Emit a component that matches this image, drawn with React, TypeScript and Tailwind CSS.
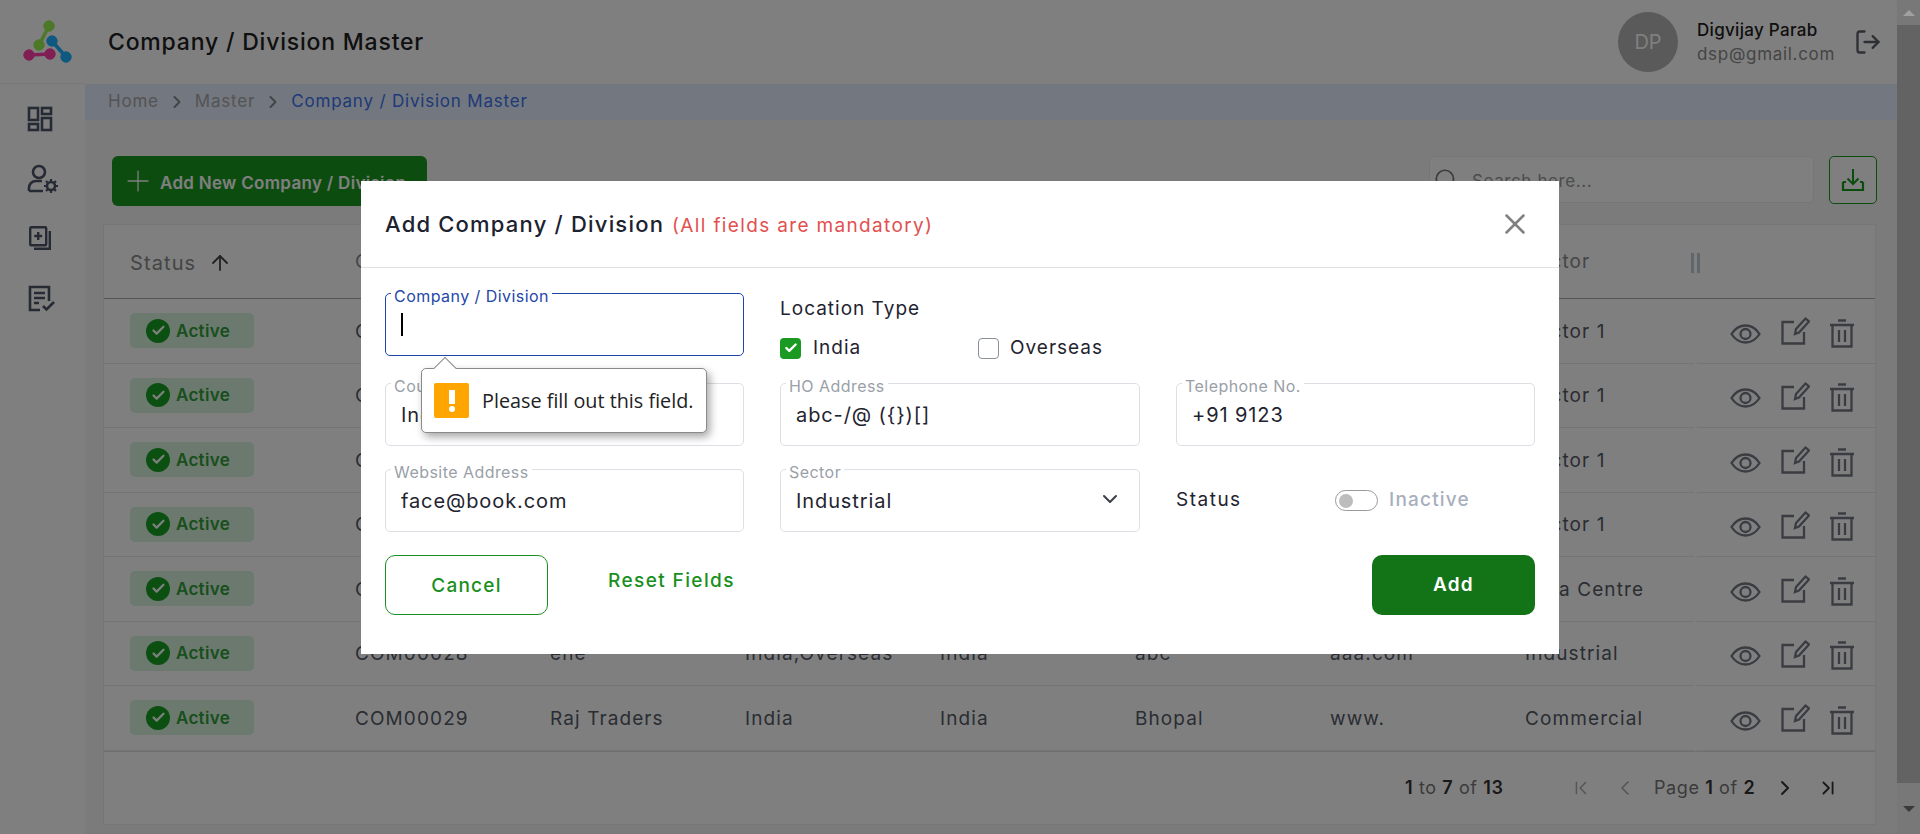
import { ArrowUp, Check, ChevronDown, ChevronFirst, ChevronLast, ChevronLeft, ChevronRight, LogOut, Plus, Search, X } from 'lucide-react'

const rows = [
  { id: 'COM00001', name: 'Alpha Ltd', loc: 'India', country: 'India', addr: 'Pune', web: 'abc.com', sector: 'Sector 1' },
  { id: 'COM00002', name: 'Beta Ltd', loc: 'India', country: 'India', addr: 'Pune', web: 'abc.com', sector: 'Sector 1' },
  { id: 'COM00003', name: 'Gamma Ltd', loc: 'India', country: 'India', addr: 'Pune', web: 'abc.com', sector: 'Sector 1' },
  { id: 'COM00004', name: 'Delta Ltd', loc: 'India', country: 'India', addr: 'Pune', web: 'abc.com', sector: 'Sector 1' },
  { id: 'COM00005', name: 'Sigma Ltd', loc: 'India', country: 'India', addr: 'Pune', web: 'abc.com', sector: 'Data Centre' },
  { id: 'COM00028', name: 'ene', loc: 'India,Overseas', country: 'India', addr: 'abc', web: 'aaa.com', sector: 'Industrial' },
  { id: 'COM00029', name: 'Raj Traders', loc: 'India', country: 'India', addr: 'Bhopal', web: 'www.', sector: 'Commercial' },
]

const gridCols = 'grid grid-cols-[251px_195px_195px_195px_195px_195px_195px_1fr]'

const Logo = () => (
  <svg width="84" height="84" viewBox="0 0 84 84">
    <g stroke="#98f050" fill="#98f050">
      <path d="M49 26 L39 45" strokeWidth="3.5" />
      <circle cx="49" cy="26" r="5.2" />
      <circle cx="39" cy="45" r="5.2" />
    </g>
    <g stroke="#1eb0ff" fill="#1eb0ff">
      <path d="M52 41 L66 57" strokeWidth="3.5" />
      <circle cx="52" cy="41" r="5.2" />
      <circle cx="66" cy="57" r="5.2" />
    </g>
    <g stroke="#ff3ea8" fill="#ff3ea8">
      <path d="M29 55 L50 54" strokeWidth="3.5" />
      <circle cx="29" cy="55" r="5.2" />
      <circle cx="50" cy="54" r="5.2" />
    </g>
  </svg>
)

const DashboardIcon = () => (
  <svg width="26" height="26" viewBox="0 0 26 26" fill="none" stroke="#4c5568" strokeWidth="2.6">
    <rect x="2" y="2" width="9" height="12" />
    <rect x="15" y="2" width="9" height="6" />
    <rect x="2" y="18" width="9" height="6" />
    <rect x="15" y="12" width="9" height="12" />
  </svg>
)

const UserGearIcon = () => (
  <svg width="32" height="30" viewBox="0 0 32 30" fill="none" stroke="#4c5568" strokeWidth="2.6">
    <circle cx="12" cy="8" r="6" />
    <path d="M2 27v-3c0-4 3-7 7-7h6M2 27h14" />
    <circle cx="24" cy="22" r="4" />
    <path d="M24 15v3M24 26v3M17 22h3M28 22h3M19 17l2 2M27 25l2 2M29 17l-2 2M21 25l-2 2" strokeWidth="2.2" />
  </svg>
)

const AddDocIcon = () => (
  <svg width="22" height="24" viewBox="0 0 22 24" fill="none" stroke="#4c5568" strokeWidth="2.4">
    <rect x="1.2" y="1.2" width="16" height="18" rx="1" />
    <path d="M20.8 5v17.8H5" />
    <path d="M9.2 6v8M5.2 10h8" />
  </svg>
)

const ChecklistIcon = () => (
  <svg width="27" height="27" viewBox="0 0 27 27" fill="none" stroke="#4c5568" strokeWidth="2.6">
    <path d="M12 25H2V2h19v14" />
    <path d="M6 8h11M6 13h11M6 18h5" />
    <path d="M15 21l3.5 3.5L26 17" />
  </svg>
)

const ExportIcon = () => (
  <svg width="24" height="24" viewBox="0 0 24 24" fill="none" stroke="#18981f" strokeWidth="2">
    <path d="M12 1v15M6.5 10.5L12 16l5.5-5.5" />
    <path d="M2 14v8h20v-8" strokeWidth="2.2" />
    <path d="M2 14h3M19 14h3" />
  </svg>
)

const EyeIcon = () => (
  <svg width="31" height="20" viewBox="0 0 31 20" fill="none" stroke="#747984" strokeWidth="2.3" className="mt-[6px]">
    <path d="M1.5 10C5 4.5 10 1.5 15.5 1.5S26 4.5 29.5 10C26 15.5 21 18.5 15.5 18.5S5 15.5 1.5 10Z" />
    <circle cx="15.5" cy="10" r="5" />
  </svg>
)

const EditIcon = () => (
  <svg width="29" height="29" viewBox="0 0 29 29" fill="none" stroke="#747984" strokeWidth="2.3">
    <path d="M13 6H1.5v21.5H23V16" />
    <path d="M14 18l1-5L24.5 2.5l3.5 3L18 16.5z" />
  </svg>
)

const TrashIcon = () => (
  <svg width="24" height="29" viewBox="0 0 24 29" fill="none" stroke="#747984" strokeWidth="2.3" className="mt-[5px]">
    <path d="M0 6h24M8 1.5h8" />
    <path d="M2.5 6v21.5h19V6" />
    <path d="M9 11v12M15 11v12" />
  </svg>
)

const ActiveBadge = () => (
  <div className="flex h-[35px] w-[124px] items-center gap-[6px] rounded-[5px] bg-[#d9f2dc] pl-[16px] text-[17px] font-semibold tracking-[0.3px] text-[#2f9f3a]">
    <span className="flex h-[24px] w-[24px] items-center justify-center rounded-full bg-[#18a023]">
      <Check size={15} strokeWidth={3.5} className="text-white" />
    </span>
    <span className="pt-[1px]">Active</span>
  </div>
)

const Field = ({ label, value, focused }: { label: string; value?: string; focused?: boolean }) => (
  <div className={`relative flex h-[63px] items-center rounded-[5px] border pl-[15px] ${focused ? 'border-[#1f45a8]' : 'border-[#dcdfe4]'}`}>
    <span className={`absolute -top-[5px] left-[5px] bg-white px-[3px] text-[16px] leading-[15px] tracking-[0.45px] ${focused ? 'text-[#2447a8]' : 'text-[#9a9fa8]'}`}>
      {label}
    </span>
    {focused ? <span className="h-[23px] w-[2px] bg-black" /> : <span className="pt-[1px] text-[20px] tracking-[0.9px] text-[#1f2430]">{value}</span>}
  </div>
)

const ValidationBubble = () => (
  <div className="absolute left-[36px] top-[75px] z-10 flex h-[65px] w-[286px] items-center gap-[13px] rounded-[5px] border border-[#8a8a8a] bg-white pl-[12px] font-['Open_Sans',sans-serif] text-[19.8px] text-[#222] shadow-[3px_4px_8px_rgba(0,0,0,0.35)]">
    <span className="absolute -top-[9px] left-[15px] h-[16px] w-[16px] rotate-45 border-l border-t border-[#8a8a8a] bg-white" />
    <span className="flex h-[35px] w-[35px] items-center justify-center rounded-[2px] bg-[#ffa500]">
      <svg width="10" height="24" viewBox="0 0 10 24" fill="white">
        <rect x="2" y="1" width="6" height="14" />
        <circle cx="5" cy="20" r="3" />
      </svg>
    </span>
    Please fill out this field.
  </div>
)

const Modal = () => (
  <div className="mt-[1px] w-[1198px] bg-white">
    <div className="flex h-[87px] items-center justify-between border-b border-[#dfe1e5] pl-[24px] pr-[27px]">
      <div className="flex items-baseline gap-[8px]">
        <span className="text-[22px] font-medium tracking-[1.2px] text-[#1c2230]">Add Company / Division</span>
        <span className="text-[19px] tracking-[1.35px] text-[#e2504f]">(All fields are mandatory)</span>
      </div>
      <X size={34} strokeWidth={1.8} className="text-[#808080]" />
    </div>

    <div className="grid grid-cols-[359px_360px_359px] gap-x-[36px] px-[24px] pt-[25px] text-[#1f2430]">
      <div className="relative mb-[27px]">
        <Field label="Company / Division" focused />
        <ValidationBubble />
      </div>
      <div className="mb-[27px] h-[63px]">
        <p className="mt-[4px] text-[19px] leading-[24px] tracking-[1px]">Location Type</p>
        <div className="mt-[16px] flex items-center text-[19px] leading-[22px] tracking-[1px]">
          <span className="flex h-[21px] w-[21px] items-center justify-center rounded-[4px] bg-[#1a9a22]">
            <Check size={14} strokeWidth={4} className="text-white" />
          </span>
          <span className="ml-[12px] w-[165px]">India</span>
          <span className="h-[21px] w-[21px] rounded-[4px] border border-[#8a8f98]" />
          <span className="ml-[11px]">Overseas</span>
        </div>
      </div>
      <div />

      <div className="mb-[23px]">
        <Field label="Country" value="India" />
      </div>
      <div className="mb-[23px]">
        <Field label="HO Address" value="abc-/@ ({})[]" />
      </div>
      <div className="mb-[23px]">
        <Field label="Telephone No." value="+91 9123" />
      </div>

      <Field label="Website Address" value="face@book.com" />
      <div className="relative">
        <Field label="Sector" value="Industrial" />
        <ChevronDown size={24} strokeWidth={2} className="absolute right-[18px] top-[18px] text-[#3a3f4a]" />
      </div>
      <div className="flex items-center">
        <span className="w-[159px] text-[19px] tracking-[1.5px]">Status</span>
        <span className="flex h-[21px] w-[43px] items-center rounded-full border border-[#9a9a9a] pl-[3px]">
          <span className="h-[14px] w-[14px] rounded-full bg-[#bdbdbd]" />
        </span>
        <span className="ml-[11px] text-[19px] font-medium tracking-[1.2px] text-[#a8afbd]">Inactive</span>
      </div>
    </div>

    <div className="flex items-start px-[24px] pb-[39px] pt-[23px] text-[19px] tracking-[1.2px]">
      <button className="h-[60px] w-[163px] rounded-[10px] border border-[#1a8f22] pt-[2px] font-medium text-[#1a8f22]">Cancel</button>
      <span className="ml-[60px] mt-[12px] font-medium tracking-[1.4px] text-[#1a8f22]">Reset Fields</span>
      <button className="ml-auto h-[60px] w-[163px] rounded-[10px] bg-[#137317] font-semibold text-white">Add</button>
    </div>
  </div>
)

const Pagination = () => (
  <div className="flex h-[73px] items-center border-t border-[#e0e0e0] text-[18px] tracking-[0.6px] text-[#777]">
    <span className="ml-[1301px] w-[165px]">
      <b className="font-semibold text-[#333]">1</b> to <b className="font-semibold text-[#333]">7</b> of <b className="font-semibold text-[#333]">13</b>
    </span>
    <ChevronFirst size={22} strokeWidth={1.6} className="text-[#aaa]" />
    <ChevronLeft size={24} strokeWidth={1.6} className="ml-[21px] text-[#aaa]" />
    <span className="ml-[17px]">
      Page <b className="font-semibold text-[#333]">1</b> of <b className="font-semibold text-[#333]">2</b>
    </span>
    <ChevronRight size={24} strokeWidth={2} className="ml-[18px] text-[#333]" />
    <ChevronLast size={22} strokeWidth={2} className="ml-[20px] text-[#333]" />
  </div>
)

const DataTable = () => (
  <div className="mt-[18px] border border-[#ececec] bg-white text-[19px] tracking-[1.1px] text-[#555a66]">
    <div className="flex h-[74px] border-b border-[#aaaaaa] text-[#8a8a8a]">
      <div className={`${gridCols} w-[1590px] items-center pt-[2px]`}>
        <div className="flex items-center gap-[12px] pl-[26px] text-[20px]">
          Status <ArrowUp size={24} strokeWidth={1.8} className="text-[#444]" />
        </div>
        <div>Company ID</div>
        <div>Name</div>
        <div>Location</div>
        <div>Country</div>
        <div>Address</div>
        <div>Website</div>
        <div className="flex items-center justify-between">
          Sector
          <span className="-mr-[6px] h-[20px] w-[9px] border-x-[3px] border-[#c0ccdd]" />
        </div>
      </div>
    </div>

    {rows.map((row) => (
      <div key={row.id} className="flex h-[64.5px]">
        <div className={`${gridCols} w-[1590px] items-center border-b border-[#e8e8e8]`}>
          <div className="pl-[26px]"><ActiveBadge /></div>
          <div className="pt-[2px]">{row.id}</div>
          <div className="pt-[2px]">{row.name}</div>
          <div className="pt-[2px]">{row.loc}</div>
          <div className="pt-[2px]">{row.country}</div>
          <div className="pt-[2px]">{row.addr}</div>
          <div className="pt-[2px]">{row.web}</div>
          <div className="pt-[2px]">{row.sector}</div>
        </div>
        <div className="ml-[3px] flex flex-1 items-center gap-[20px] border-b border-[#e8e8e8] pl-[33px]">
          <EyeIcon />
          <EditIcon />
          <TrashIcon />
        </div>
      </div>
    ))}

    <Pagination />
  </div>
)

export default function App() {
  return (
    <div className="relative flex h-screen overflow-hidden bg-[#f6f6f6] font-['Inter',sans-serif] text-[#2a2e38]">
      {/* Sidebar */}
      <aside className="flex w-[85px] shrink-0 flex-col bg-white">
        <div className="h-[84px] border-b border-[#f0f0f0]">
          <Logo />
        </div>
        <nav className="flex flex-col items-center pr-[5px] pt-[5px]">
          <div className="flex h-[60px] items-center"><DashboardIcon /></div>
          <div className="flex h-[60px] items-center pl-[5px]"><UserGearIcon /></div>
          <div className="flex h-[58px] items-center"><AddDocIcon /></div>
          <div className="flex h-[62px] items-center pl-[2px]"><ChecklistIcon /></div>
        </nav>
      </aside>

      <div className="flex min-w-0 flex-1 flex-col">
        {/* Header */}
        <header className="flex h-[84px] shrink-0 items-center justify-between bg-white pl-[23px] pr-[15px]">
          <h1 className="text-[23px] font-medium tracking-[0.8px] text-[#202020]">Company / Division Master</h1>
          <div className="flex items-center">
            <span className="flex h-[60px] w-[60px] items-center justify-center rounded-full bg-[#b4b4b4] text-[20px] text-white">DP</span>
            <div className="ml-[19px] w-[157px]">
              <p className="text-[17px] font-medium leading-[24px] tracking-[0.3px] text-[#202020]">Digvijay Parab</p>
              <p className="text-[17px] leading-[24px] tracking-[0.7px] text-[#8a8a8a]">dsp@gmail.com</p>
            </div>
            <LogOut size={28} strokeWidth={2} className="text-[#5a5f6a]" />
          </div>
        </header>

        {/* Breadcrumb */}
        <div className="flex h-[36px] shrink-0 items-center gap-[8px] bg-[#e6eeff] pl-[23px] text-[17px] tracking-[0.8px] text-[#a8a8a8]">
          <span>Home</span>
          <ChevronRight size={20} strokeWidth={2.4} className="text-[#888]" />
          <span>Master</span>
          <ChevronRight size={20} strokeWidth={2.4} className="text-[#888]" />
          <span className="text-[#3c74f0]">Company / Division Master</span>
        </div>

        <main className="flex flex-1 flex-col pl-[18px] pr-[21px] pt-[36px]">
          {/* Toolbar */}
          <div className="flex h-[50px] items-start pl-[9px]">
            <button className="flex h-[50px] w-[315px] shrink-0 items-center gap-[5px] rounded-[6px] bg-[#18981f] pl-[9px] text-[17px] font-semibold tracking-[0.3px] text-white">
              <Plus size={34} strokeWidth={0.9} />
              <span className="pt-[5px]">Add New Company / Division</span>
            </button>
            <div className="ml-auto flex h-[47px] w-[385px] items-center gap-[13px] rounded-[5px] border border-[#ececec] bg-white pl-[3px] text-[17px] tracking-[0.6px] text-[#999]">
              <Search size={26} strokeWidth={1.6} className="text-[#777]" />
              <span className="pt-[4px]">Search here...</span>
            </div>
            <span className="-mr-[1px] ml-[15px] flex h-[48px] w-[48px] items-center justify-center rounded-[5px] border border-[#18981f] bg-white">
              <ExportIcon />
            </span>
          </div>

          <DataTable />
        </main>
      </div>

      {/* Scrollbar */}
      <div className="z-20 flex w-[23px] shrink-0 flex-col bg-[#787878]">
        <div className="flex h-[25px] items-center justify-center">
          <span className="h-0 w-0 border-x-[6px] border-b-[6px] border-x-transparent border-b-[#a0a0a0]" />
        </div>
        <div className="h-[758px] bg-[#636363]" />
        <div className="flex flex-1 items-center justify-center">
          <span className="h-0 w-0 border-x-[6px] border-t-[6px] border-x-transparent border-t-[#3a3a3a]" />
        </div>
      </div>

      {/* Dim layer with the dialog */}
      <div className="fixed inset-0 z-10 flex items-center justify-center bg-black/50">
        <Modal />
      </div>
    </div>
  )
}
